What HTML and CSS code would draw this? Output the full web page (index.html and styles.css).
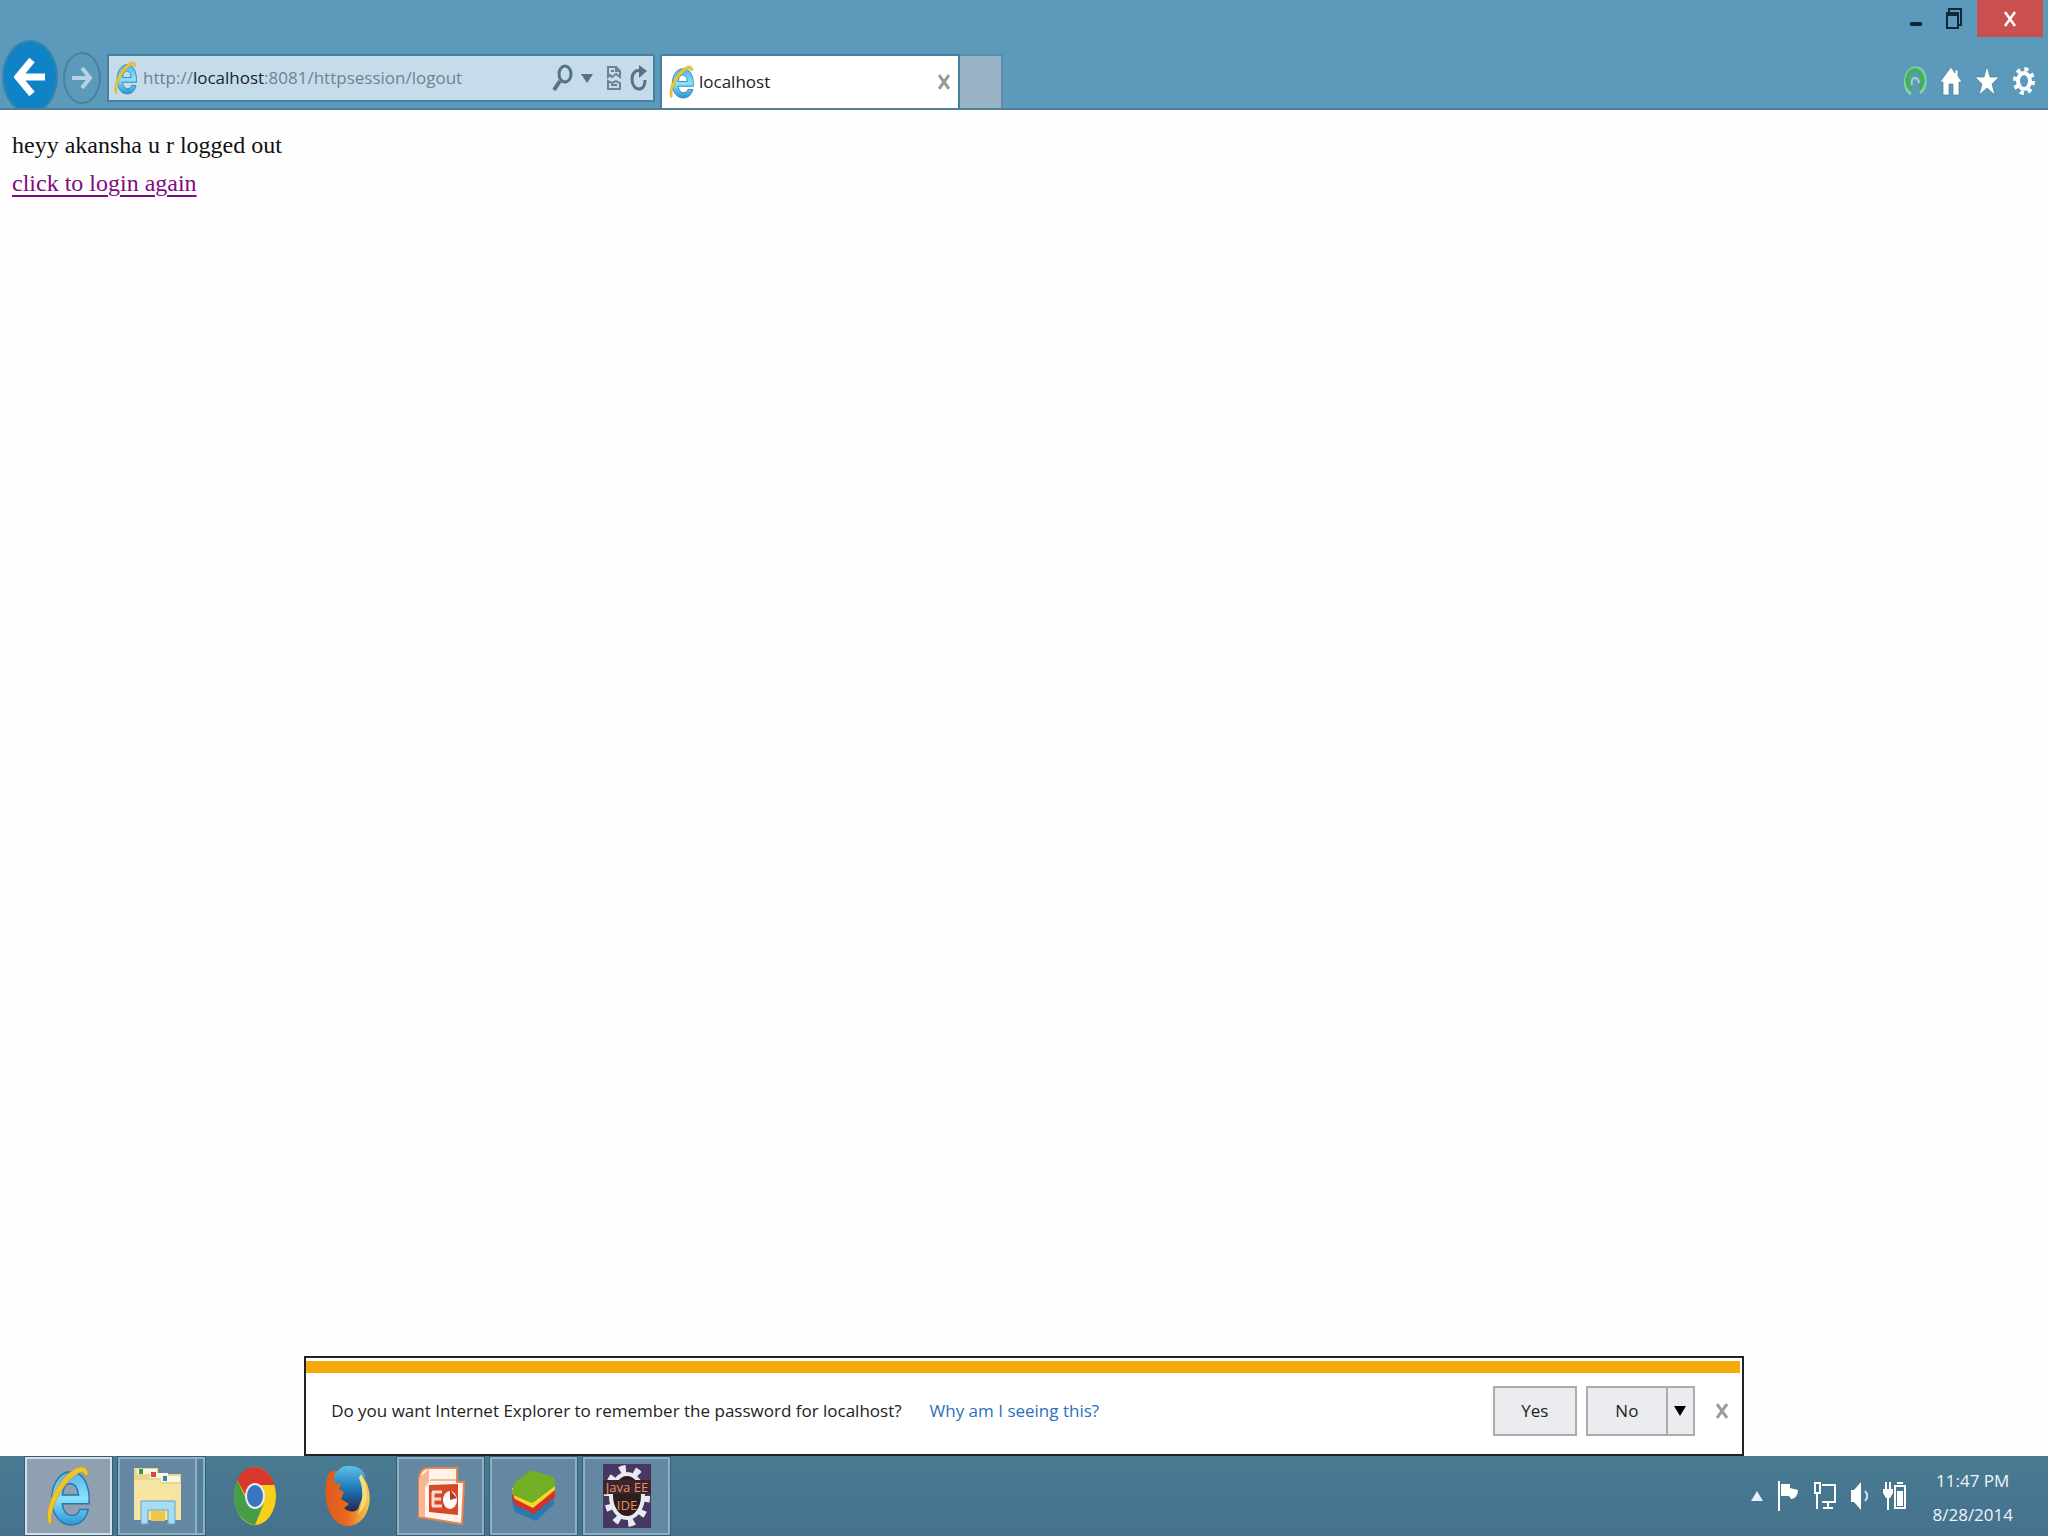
FILE: index.html
```html
<!DOCTYPE html>
<html lang="en">
<head>
<meta charset="utf-8">
<title>localhost</title>
<link rel="stylesheet" href="styles.css">
</head>
<body>
<svg class="defs" aria-hidden="true">
  <defs>
    <linearGradient id="ie-blue" x1="0" y1="0" x2="0" y2="1"><stop offset="0" stop-color="#4fb4e6"/><stop offset=".5" stop-color="#8ae2fb"/><stop offset="1" stop-color="#2b94d6"/></linearGradient>
    <linearGradient id="fox" x1="0" y1="0" x2="1" y2="0"><stop offset="0" stop-color="#dd5a1c"/><stop offset=".5" stop-color="#ea6a1e"/><stop offset="1" stop-color="#f7cf4a"/></linearGradient>
    <linearGradient id="globe" x1="0" y1="0" x2="0" y2="1"><stop offset="0" stop-color="#5cc2ea"/><stop offset=".5" stop-color="#1b78b8"/><stop offset="1" stop-color="#2a2450"/></linearGradient>
    <symbol id="ie" viewBox="0 0 48 64" preserveAspectRatio="none">
      <path d="M45 40H17c1 8 5 12 10 12 4 0 7-2 8-6h9c-2 10-9 16-18 16C14 62 6 50 6 35S14 7 26 7s20 12 19 33zM17 31h17c-1-8-4-12-9-12-4 0-7 4-8 12z" fill="url(#ie-blue)" stroke="#2577ad" stroke-width="1.500"/>
      <path d="M3 61C-3 48 10 18 27 6c8-6 17-6 17 4l-4 1c0-5-5-4-10 0C16 22 4 44 6 60z" fill="#eec52f" stroke="#b8922a" stroke-width=".6"/>
    </symbol>
  </defs>
</svg>

<header class="chrome">
  <div class="window-controls">
    <button class="win-btn" aria-label="Minimize"><svg width="14" height="28" viewBox="0 0 14 28"><rect x="1" y="17" width="12" height="4" rx="1" fill="#10283c"/></svg></button>
    <button class="win-btn" aria-label="Restore"><svg width="18" height="24" viewBox="0 0 18 24"><path d="M4 5V2h12v16h-3" fill="none" stroke="#10283c" stroke-width="2"/><rect x="2" y="7" width="11" height="14" fill="none" stroke="#10283c" stroke-width="2"/><path d="M1 7h13" stroke="#10283c" stroke-width="4"/></svg></button>
    <button class="win-btn win-close" aria-label="Close"><svg width="14" height="18" viewBox="0 0 14 18"><path d="M2 2l10 14M12 2L2 16" stroke="#fff" stroke-width="2.500"/></svg></button>
  </div>
  <div class="nav-row">
    <button class="back" aria-label="Back"><svg width="32" height="38" viewBox="0 0 32 38"><path d="M31 19H4M18 2L4 19l14 17" fill="none" stroke="#fff" stroke-width="7"/></svg></button>
    <button class="forward" aria-label="Forward"><svg width="22" height="24" viewBox="0 0 22 24"><path d="M1 12h18M11 2l8 10-8 10" fill="none" stroke="#b5d3e4" stroke-width="4"/></svg></button>
    <form class="address">
      <svg width="24" height="34"><use href="#ie"/></svg>
      <div class="url" role="textbox" aria-label="Address" tabindex="0">http://<b>localhost</b>:8081/httpsession/logout</div>
      <button type="button" class="tool" aria-label="Search"><svg width="21" height="28" viewBox="0 0 21 28"><ellipse cx="13" cy="10" rx="6" ry="8" fill="none" stroke="#56728a" stroke-width="3"/><path d="M8 17L2 26" stroke="#56728a" stroke-width="4"/></svg></button>
      <button type="button" class="tool" aria-label="Address options"><svg width="12" height="9"><path d="M0 0h12L6 9z" fill="#56728a"/></svg></button>
      <button type="button" class="tool compat" aria-label="Compatibility view"><svg width="16" height="26" viewBox="0 0 16 26"><path d="M2 12V2h8l4 4v6l-4-3-4 3-2-2zM2 24v-8l4 2 4-2 4 2v6zM10 2v4h4M5 6h3M5 20h6" fill="none" stroke="#6d8294" stroke-width="2"/></svg></button>
      <button type="button" class="tool" aria-label="Refresh"><svg width="17" height="26" viewBox="0 0 17 26"><path d="M11 6C5 4 2 9 2 14c0 6 3 10 7 10s6-4 6-9" fill="none" stroke="#56728a" stroke-width="3"/><path d="M9 0l8 6-8 7z" fill="#56728a"/></svg></button>
    </form>
    <div class="tab">
      <svg width="26" height="34"><use href="#ie"/></svg>
      <span class="tab-title">localhost</span>
      <button class="tab-close" aria-label="Close tab"><svg width="12" height="18" viewBox="0 0 12 18"><path d="M1 2l10 14M11 2L1 16" stroke="#999" stroke-width="3"/></svg></button>
    </div>
    <button class="new-tab" aria-label="New tab"></button>
    <div class="browser-tools">
      <button aria-label="Feedback"><svg width="24" height="32" viewBox="0 0 24 32"><path d="M8 29C0 26 0 4 12 3s13 20 5 25" fill="none" stroke="#86cfae" stroke-width="3"/><path d="M8 24C1 18 5 5 12 5s11 13 4 19" fill="none" stroke="#45b058" stroke-width="4"/><path d="M9 20c-2-8 6-10 7-2" fill="none" stroke="#9fdcb2" stroke-width="2"/></svg></button>
      <button aria-label="Home"><svg width="22" height="30" viewBox="0 0 22 30"><path d="M11 1L0 16h3v13h6V18h4v11h6V16h3l-4-6V4h-3v3z" fill="#fff" stroke="#4b7c99" stroke-width=".7"/></svg></button>
      <button aria-label="Favorites"><svg width="24" height="30" viewBox="0 0 24 30"><path d="M12 0l3 11h9l-7 7 3 11-8-7-8 7 3-11-7-7h9z" fill="#fff" stroke="#4b7c99" stroke-width=".7"/></svg></button>
      <button aria-label="Tools"><svg width="24" height="30" viewBox="0 0 24 30"><ellipse cx="12" cy="15" rx="9" ry="12" fill="none" stroke="#fff" stroke-width="4" stroke-dasharray="4 4.300"/><ellipse cx="12" cy="15" rx="6" ry="8" fill="none" stroke="#fff" stroke-width="4"/></svg></button>
    </div>
  </div>
</header>

<main class="page">
  <div class="content">
    <p>heyy akansha u r logged out</p>
    <p><a href="#login">click to login again</a></p>
  </div>
  <aside class="notice">
    <div class="notice-stripe"></div>
    <div class="notice-row">
      <span>Do you want Internet Explorer to remember the password for localhost?</span>
      <a href="#why">Why am I seeing this?</a>
      <div class="notice-actions">
        <button class="btn">Yes</button>
        <div class="split"><button class="btn btn-no">No</button><button class="btn btn-more" aria-label="More options"><svg width="12" height="10"><path d="M0 0h12L6 10z"/></svg></button></div>
        <button class="dismiss" aria-label="Dismiss"><svg width="12" height="16" viewBox="0 0 12 16"><path d="M1 1l10 14M11 1L1 15" stroke="#9b9b9b" stroke-width="3"/></svg></button>
      </div>
    </div>
  </aside>
</main>

<footer class="taskbar">
  <nav class="apps">
    <button class="app open active" aria-label="Internet Explorer"><svg width="46" height="62"><use href="#ie"/></svg></button>
    <button class="app open stacked" aria-label="File Explorer"><svg width="50" height="58" viewBox="0 0 50 58"><path d="M1 6V1h24v6h23v46H1z" fill="#e9d58c"/><path d="M4 2h20v5H4zM17 6h18v5H17zM28 9h19v6H28z" fill="#f8f6e4"/><path d="M6 2h4v5H6z" fill="#2f9a4d"/><path d="M18 5h5v5h-5z" fill="#d34b3c"/><path d="M30 9h4v5h-4z" fill="#268cb5"/><path d="M1 13h25l3 4h19v36H1z" fill="#f5e4a2"/><path d="M18 44h14v10H18z" fill="#f0c649"/><path d="M8 57V34h34v23h-7V43H15v14z" fill="#a9dcf3" stroke="#5ba5cd" stroke-width="1"/></svg></button>
    <button class="app" aria-label="Chrome"><svg width="44" height="60" viewBox="0 0 44 60" preserveAspectRatio="none"><ellipse cx="22" cy="30" rx="21" ry="29" fill="#f8cf19"/><path d="M4 14C12-4 34-4 42 19H22c-6 0-9 6-9 11z" fill="#d9382f"/><path d="M4 14C-4 34 4 56 22 59l9-22c-5 7-14 5-17-2z" fill="#479d46"/><ellipse cx="22" cy="30" rx="10" ry="13" fill="#e9f0f5"/><ellipse cx="22" cy="30" rx="8" ry="11" fill="#3976bd"/></svg></button>
    <button class="app" aria-label="Firefox"><svg width="46" height="62" viewBox="0 0 46 62" preserveAspectRatio="none"><path d="M3 9c5-5 35-8 40 13 6 20-5 39-20 39C4 61-4 33 3 9z" fill="url(#fox)"/><path d="M9 11C13 3 20 0 26 1c8 0 14 5 15 13l-5-2c4 9 4 18 0 24l-3 8c-4 4-10 3-14-1l5-4-8-5 3-7-5-3 2-6-6 1z" fill="url(#globe)"/><path d="M36 9c9 12 8 32-3 40 5-12 6-25 1-36z" fill="#f5dc7c"/></svg></button>
    <button class="app open" aria-label="PowerPoint"><svg width="48" height="60" viewBox="0 0 48 60"><path d="M2 12C3 5 6 2 12 2h28v14h7l-2 42L2 51z" fill="#fff3ec" stroke="#e6854f" stroke-width="2"/><path d="M12 15h27v-2H14l-6 8v30H2V12L12 3z" fill="#f6b795"/><path d="M12 19l29-1v31l-29-3z" fill="#d84826"/><path d="M15 26h10M15 33h9M15 40h10M16 26v14" stroke="#fbd9cb" stroke-width="3"/><ellipse cx="33" cy="34" rx="7" ry="9" fill="#fff"/><path d="M33 34V24l7 8z" fill="#b83822"/></svg></button>
    <button class="app open" aria-label="BlueStacks"><svg width="46" height="52" viewBox="0 0 46 52"><path d="M1 33l3 9 21 9 18-17V23L1 28z" fill="#2879b4"/><path d="M1 28l3 7 19 9 21-17v-9L1 24z" fill="#d3322c"/><path d="M1 22l3 7 18 9 22-18v-6L1 18z" fill="#f7d52c"/><path d="M1 21L4 12 19 1q2-1 5 0l18 6q2 1 2 4v5L23 32q-3 1-5 0L2 25z" fill="#73af25"/></svg></button>
    <button class="app open" aria-label="Java EE IDE"><svg width="48" height="64" viewBox="0 0 48 64"><path d="M0 0h48v64H0z" fill="#483762"/><ellipse cx="24" cy="32" rx="19" ry="27" fill="none" stroke="#e8eaf0" stroke-width="8" stroke-dasharray="6 8.500"/><ellipse cx="24" cy="32" rx="16" ry="22" fill="#2d1d20" stroke="#e8eaf0" stroke-width="4"/><path d="M0 16h48v14H0z" fill="#3c2433"/><text x="24" y="28" class="ide">Java EE</text><text x="24" y="46" class="ide">IDE</text></svg></button>
  </nav>
  <div class="tray">
    <button aria-label="Show hidden icons"><svg width="12" height="10"><path d="M0 10h12L6 0z" fill="#e8f0ff"/></svg></button>
    <button aria-label="Action Center"><svg width="24" height="32" viewBox="0 0 24 32"><path d="M3 1v30" stroke="#fff" stroke-width="2"/><path d="M5 4h9v4l8 2c0 5-3 9-7 9l-2-3H5z" fill="#fff"/></svg></button>
    <button aria-label="Network"><svg width="24" height="30" viewBox="0 0 24 30"><path d="M9 4h13v17H9M4 12v16M10 27h10M15 21v6" fill="none" stroke="#fff" stroke-width="2"/><rect x="2" y="2" width="5" height="10" fill="#47748e" stroke="#fff" stroke-width="2"/></svg></button>
    <button aria-label="Volume"><svg width="20" height="30" viewBox="0 0 20 30"><path d="M1 9h3l7-8v28l-7-8H1z" fill="#fff"/><path d="M15 10c3 3 3 7 0 10" fill="none" stroke="#d0e2ed" stroke-width="2"/></svg></button>
    <button aria-label="Battery"><svg width="24" height="30" viewBox="0 0 24 30"><path d="M3 1v7M7 1v7M5 17v12" stroke="#fff" stroke-width="2"/><path d="M0 8h10v4l-3 5H3l-3-5z" fill="#fff"/><path d="M12 5h10v22H12zM14 2h6" fill="none" stroke="#fff" stroke-width="2"/><path d="M14 10h6v15h-6z" fill="#fff"/></svg></button>
    <time class="clock" datetime="2014-08-28T23:47"><span>11:47 PM</span><span>8/28/2014</span></time>
  </div>
</footer>
</body>
</html>
```
FILE: styles.css
```css
* { box-sizing: border-box; }
body {
  margin: 0;
  min-height: 100vh;
  display: flex;
  flex-direction: column;
  background: #fefefe;
  font-family: "Open Sans", "Noto Sans", sans-serif;
  font-size: 17px;
  line-height: 32px;
}
button {
  display: flex;
  align-items: center;
  justify-content: center;
  margin: 0;
  padding: 0;
  border: 0;
  background: none;
  color: inherit;
  font: inherit;
}
svg { display: block; flex: none; }
p { margin: 0; }
.defs { position: absolute; width: 0; height: 0; }

.chrome {
  height: 110px;
  display: flex;
  flex-direction: column;
  overflow: hidden;
  background: #5b9aba;
  border-bottom: 2px solid #527f98;
}
.window-controls { display: flex; justify-content: flex-end; height: 37px; padding-right: 5px; }
.win-btn { width: 38px; height: 37px; }
.win-close { width: 66px; margin-left: 4px; background: #c9504f; }
.nav-row { flex: 1; display: flex; align-items: flex-end; }
.back {
  width: 56px;
  height: 74px;
  margin: 0 0 -6px 2px;
  background: #0f83c5;
  border: 2px solid #3c83ab;
  border-radius: 50%;
}
.forward {
  width: 38px;
  height: 52px;
  margin: 0 6px 4px 5px;
  border: 2px solid #47819f;
  border-radius: 50%;
}
.address {
  display: flex;
  align-items: center;
  width: 548px;
  height: 48px;
  padding: 0 6px 0 5px;
  margin-bottom: 6px;
  background: #c7dcea;
  border: 2px solid #47819f;
}
.url { flex: 1; margin-left: 5px; color: #73828e; white-space: nowrap; }
.url b { color: #17242e; font-weight: 400; }
.tool { margin-left: 8px; }
.compat { margin-left: 13px; }
.tab {
  display: flex;
  align-items: center;
  width: 300px;
  height: 54px;
  margin-left: 5px;
  padding: 0 8px 0 7px;
  background: #fff;
  border: 2px solid #47819f;
  border-bottom: 0;
}
.tab-title { flex: 1; margin-left: 4px; color: #222; }
.new-tab { width: 43px; height: 54px; background: #9ab4c7; border: 2px solid #5b8ba8; border-left: 0; border-bottom: 0; }
.browser-tools { display: flex; align-items: center; gap: 13px; height: 54px; margin-left: auto; padding-right: 12px; }

.page { flex: 1; display: flex; flex-direction: column; }
.content {
  flex: 1;
  padding: 16px 12px;
  color: #111;
  font-family: "Liberation Serif", serif;
  font-size: 24px;
  line-height: 38px;
}
.content a { color: #800b80; text-underline-offset: 4px; }

.notice {
  width: 70.3%;
  height: 100px;
  margin: 0 auto;
  display: flex;
  flex-direction: column;
  background: #fff;
  border: 2px solid #222;
}
.notice-stripe { height: 12px; margin: 3px 2px 0 0; background: #f5a90a; }
.notice-row { flex: 1; display: flex; align-items: center; padding: 0 14px 6px 25px; color: #222; }
.notice-row a { margin-left: 28px; color: #2a70c0; text-decoration: none; }
.notice-actions { display: flex; align-items: center; margin-left: auto; }
.btn { width: 84px; height: 50px; background: #ebecef; border: 2px solid #acacac; }
.split { display: flex; margin: 0 21px 0 9px; }
.btn-no { width: 80px; border-right: 0; }
.btn-more { width: 29px; }

.taskbar {
  display: flex;
  align-items: center;
  justify-content: space-between;
  height: 80px;
  background: linear-gradient(#487b92, #46718d);
}
.apps { display: flex; gap: 6px; padding-left: 25px; }
.app { width: 87px; height: 78px; border: 2px solid transparent; }
.open { background: #6488a1; border-color: #8fb0c0; outline: 1px solid #345e76; }
.active { background: #91a0b1; border-color: #d3e0e8; }
.stacked { padding-right: 8px; box-shadow: inset -6px 0 #52819a, inset -8px 0 #8fb0c0; }
.ide { fill: #e89355; font-size: 13px; text-anchor: middle; }
.tray { display: flex; align-items: center; gap: 13px; padding-right: 35px; }
.clock { display: flex; flex-direction: column; align-items: center; margin-left: 12px; padding-top: 4px; color: #eef5fa; line-height: 34px; }
```
